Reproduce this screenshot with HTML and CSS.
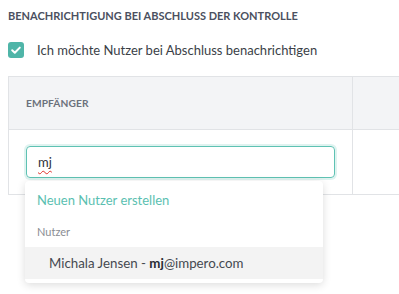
FILE: index.html
```html
<!DOCTYPE html>
<html lang="de">
<head>
  <meta charset="UTF-8">
  <title>Benachrichtigung</title>
  <link rel="stylesheet" href="styles.css">
</head>
<body>
  <section class="notify">
    <h3 class="section-title">Benachrichtigung bei Abschluss der Kontrolle</h3>

    <label class="check-row">
      <span class="checkbox">
        <svg viewBox="0 0 16 16" width="16" height="16">
          <path d="M4.2 8.3l2.6 2.5 5-5.2" fill="none" stroke="#fff" stroke-width="2" stroke-linecap="round" stroke-linejoin="round"/>
        </svg>
      </span>
      <span class="check-label">Ich möchte Nutzer bei Abschluss benachrichtigen</span>
    </label>

    <table class="recipients">
      <thead>
        <tr>
          <th class="col-main">Empfänger</th>
          <th class="col-extra"></th>
        </tr>
      </thead>
      <tbody>
        <tr>
          <td class="col-main">
            <div class="picker">
              <div class="picker-input"><span class="typed">mj</span></div>
              <div class="dropdown">
                <div class="dropdown-action">Neuen Nutzer erstellen</div>
                <div class="dropdown-group">Nutzer</div>
                <div class="dropdown-item">Michala Jensen - <b>mj</b>@impero.com</div>
              </div>
            </div>
          </td>
          <td class="col-extra"></td>
        </tr>
      </tbody>
    </table>
  </section>
</body>
</html>
```

FILE: styles.css
```css
/* Base */
* {
  margin: 0;
  padding: 0;
  box-sizing: border-box;
}

html,
body {
  height: 100%;
}

body {
  font-family: Lato, "Open Sans", sans-serif;
  color: #3b3f47;
  background: #fff;
  padding: 0 0 0 8px;
}

/* Section title */
.section-title {
  font-size: 11px;
  font-weight: 700;
  text-transform: uppercase;
  color: #4b5060;
  line-height: 16px;
  padding-top: 8px;
}

/* Checkbox row */
.check-row {
  display: flex;
  align-items: center;
  gap: 13px;
  margin-top: 17px;
  height: 18px;
}

.checkbox {
  width: 16px;
  height: 16px;
  border-radius: 3px;
  background: #4fb5a8;
  display: flex;
}

.check-label {
  font-size: 13px;
}

/* Table */
.recipients {
  margin-top: 17px;
  border-collapse: collapse;
  width: 391px;
}

.recipients th,
.recipients td {
  border: 1px solid #e1e3e6;
  text-align: left;
}

.recipients .col-extra {
  border-right: none;
}

.recipients th {
  background: #f3f4f6;
  height: 53px;
  padding: 0 17px;
  font-size: 10.2px;
  font-weight: 700;
  text-transform: uppercase;
  color: #6b717c;
  letter-spacing: 0.1px;
}

.recipients td {
  height: 65px;
  padding: 0 16px;
}

.col-main {
  width: 344px;
}

/* Picker */
.picker {
  position: relative;
}

.picker-input {
  height: 32px;
  border: 1px solid #5fc2b3;
  border-radius: 4px;
  box-shadow: 0 0 0 2px rgba(95, 194, 179, 0.2);
  margin: 0 1px;
  padding: 0 11px;
  display: flex;
  align-items: center;
  font-size: 13px;
  color: #2e323a;
}

.typed {
  text-decoration: underline wavy #e0312b;
  text-decoration-thickness: 1px;
  text-underline-offset: 3px;
}

.dropdown {
  position: absolute;
  top: 35px;
  left: 0;
  width: 298px;
  background: #fff;
  border-radius: 4px;
  box-shadow: 0 2px 8px rgba(0, 0, 0, 0.14);
  padding-bottom: 4px;
  z-index: 2;
}

.dropdown-action {
  color: #5bbfb1;
  font-size: 13px;
  padding: 11px 12px 0;
  height: 37px;
}

.dropdown-group {
  color: #8a8d93;
  font-size: 11px;
  padding: 7px 12px 0;
  height: 29px;
}

.dropdown-item {
  background: #f3f3f3;
  height: 32px;
  padding: 0 24px;
  display: flex;
  align-items: center;
  font-size: 13.3px;
  color: #454950;
  white-space: pre;
}

.dropdown-item b {
  color: #2a2d33;
}
```
